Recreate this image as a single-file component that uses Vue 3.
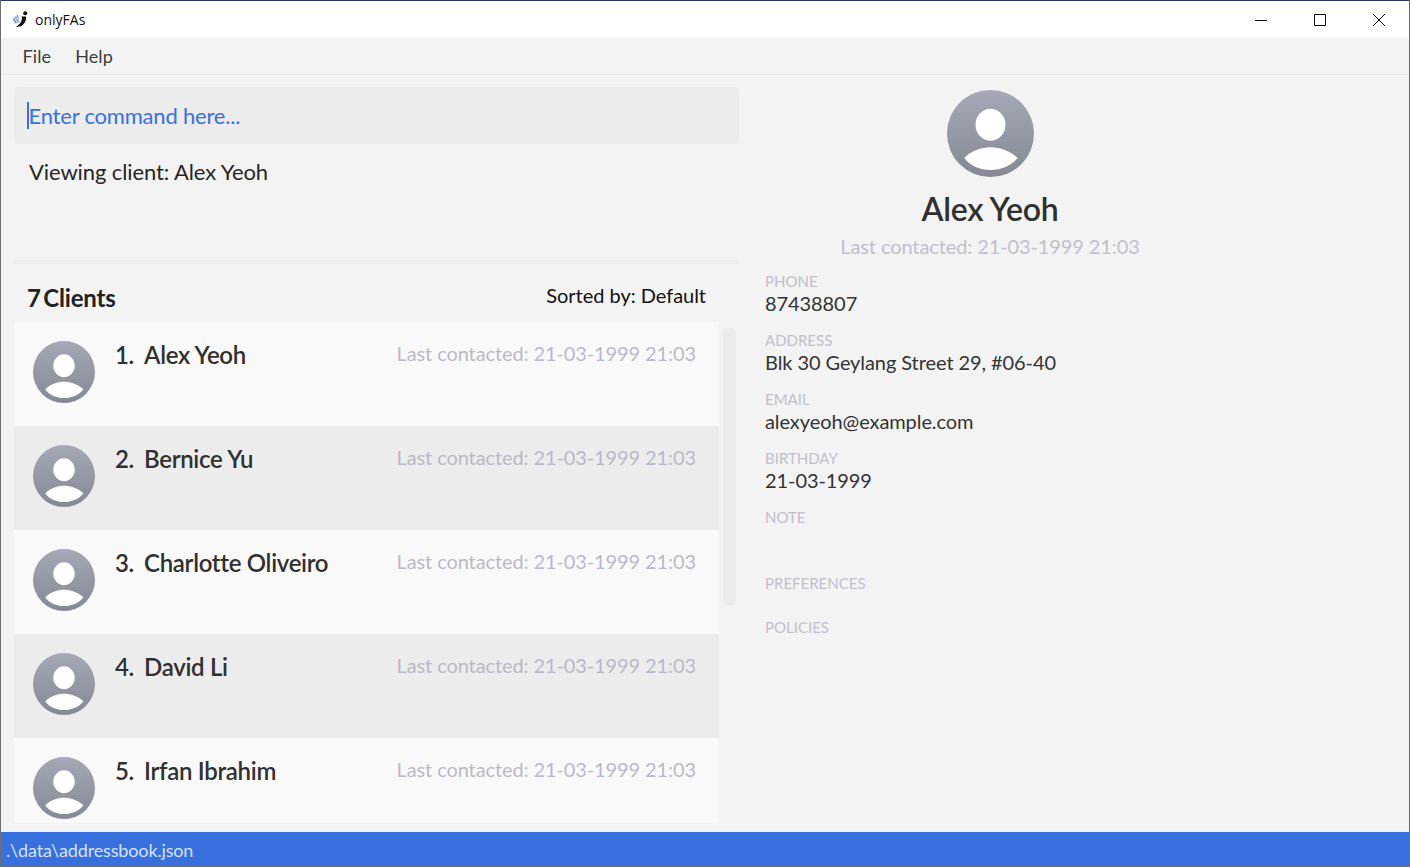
<script setup>
const clients = [
  { id: 1, name: 'Alex Yeoh' },
  { id: 2, name: 'Bernice Yu' },
  { id: 3, name: 'Charlotte Oliveiro' },
  { id: 4, name: 'David Li' },
  { id: 5, name: 'Irfan Ibrahim' },
]
const fields = [
  { label: 'PHONE', value: '87438807' },
  { label: 'ADDRESS', value: 'Blk 30 Geylang Street 29, #06-40' },
  { label: 'EMAIL', value: 'alexyeoh@example.com' },
  { label: 'BIRTHDAY', value: '21-03-1999' },
  { label: 'NOTE', value: '' },
  { label: 'PREFERENCES', value: '' },
  { label: 'POLICIES', value: '' },
]
</script>

<template>
  <div class="window">
    <header class="titlebar">
      <svg class="logo" viewBox="0 0 17 17" width="17" height="17">
        <path d="M0.5 8 L6 3.5 L7.5 11 L3 12.5 Z" fill="#7f9fd6" />
        <path d="M2.5 7 L5 11 M4.5 5.5 L6.5 10" stroke="#fff" stroke-width="0.8" fill="none" />
        <path d="M9.5 5.5 C11 9.5 8 13.5 4 15.5 C9.5 17 15 11.5 14 5.5 Z" fill="#111" />
        <circle cx="13.2" cy="2.2" r="2" fill="#111" />
      </svg>
      <span class="app-name">onlyFAs</span>
      <div class="controls">
        <svg viewBox="0 0 14 14" width="14" height="14"><path d="M1 7.5 H13" stroke="#111" fill="none" /></svg>
        <svg viewBox="0 0 14 14" width="14" height="14"><rect x="1.5" y="1.5" width="11" height="11" stroke="#111" fill="none" /></svg>
        <svg viewBox="0 0 14 14" width="14" height="14"><path d="M1 1 L13 13 M13 1 L1 13" stroke="#111" fill="none" /></svg>
      </div>
    </header>

    <nav class="menubar">
      <span>File</span>
      <span>Help</span>
    </nav>

    <main class="content">
      <section class="left">
        <div class="command"><i class="caret"></i><span>Enter command here...</span></div>
        <p class="result">Viewing client: Alex Yeoh</p>
        <div class="list-head">
          <strong>7 Clients</strong>
          <span class="sorted">Sorted by: Default</span>
        </div>
        <div class="list-wrap">
          <ul class="list">
            <li v-for="c in clients" :key="c.id" class="row">
              <svg class="avatar" viewBox="0 0 87 87">
                <defs>
                  <linearGradient :id="'g' + c.id" x1="0" y1="0" x2="0" y2="1">
                    <stop offset="0" stop-color="#a5a9b7" />
                    <stop offset="1" stop-color="#848994" />
                  </linearGradient>
                </defs>
                <circle cx="43.5" cy="43.5" r="43.5" :fill="'url(#g' + c.id + ')'" />
                <ellipse cx="43.5" cy="34.7" rx="15" ry="16" fill="#fff" />
                <path d="M17.3 68 C24 61 34 57.3 43.5 57.3 C53 57.3 63 61 70.7 68 C64 76 54 80 43.5 80 C33 80 23 76 17.3 68Z" fill="#fff" />
              </svg>
              <div class="name"><span class="num">{{ c.id }}.</span>{{ c.name }}</div>
              <div class="contacted">Last contacted: 21-03-1999 21:03</div>
            </li>
          </ul>
          <div class="track"><div class="thumb"></div></div>
        </div>
      </section>

      <aside class="detail">
        <div class="hero">
          <svg class="hero-avatar" viewBox="0 0 87 87">
            <defs>
              <linearGradient id="gh" x1="0" y1="0" x2="0" y2="1">
                <stop offset="0" stop-color="#a5a9b7" />
                <stop offset="1" stop-color="#848994" />
              </linearGradient>
            </defs>
            <circle cx="43.5" cy="43.5" r="43.5" fill="url(#gh)" />
            <ellipse cx="43.5" cy="34.7" rx="15" ry="16" fill="#fff" />
            <path d="M17.3 68 C24 61 34 57.3 43.5 57.3 C53 57.3 63 61 70.7 68 C64 76 54 80 43.5 80 C33 80 23 76 17.3 68Z" fill="#fff" />
          </svg>
          <h1>Alex Yeoh</h1>
          <div class="hero-contacted">Last contacted: 21-03-1999 21:03</div>
        </div>
        <dl class="fields">
          <div v-for="f in fields" :key="f.label" class="field" :class="'f-' + f.label.toLowerCase()">
            <dt>{{ f.label }}</dt>
            <dd v-if="f.value">{{ f.value }}</dd>
          </div>
        </dl>
      </aside>
    </main>

    <footer class="status">.\data\addressbook.json</footer>
  </div>
</template>

<style>
html, body { margin: 0; padding: 0; overflow: hidden; }
</style>

<style scoped>
.window {
  width: 1410px;
  height: 867px;
  box-sizing: border-box;
  display: flex;
  flex-direction: column;
  overflow: hidden;
  background: #f3f3f3;
  border: 1px solid #6e6e6e;
  border-top-color: #2b3460;
  font-family: Lato, sans-serif;
  color: #2f2f2f;
}
.titlebar {
  height: 37px;
  flex: none;
  background: #fff;
  display: flex;
  align-items: center;
  padding-left: 11px;
}
.logo { margin-right: 6px; }
.app-name { font: 14px "Open Sans", sans-serif; color: #111; }
.controls {
  margin-left: auto;
  display: flex;
  gap: 45px;
  padding-right: 23px;
}
.menubar {
  height: 37px;
  flex: none;
  box-sizing: border-box;
  border-bottom: 1px solid #ebebeb;
  display: flex;
  align-items: center;
  gap: 24px;
  padding-left: 21.5px;
  font-size: 18px;
  letter-spacing: 0.1px;
  color: #3c3c3c;
}
.content { flex: 1; min-height: 0; display: flex; }
.left {
  width: 725px;
  margin-left: 13px;
  padding-top: 12px;
  display: flex;
  flex-direction: column;
  min-height: 0;
}
.command {
  height: 57px;
  flex: none;
  background: #ececec;
  border-radius: 4px;
  display: flex;
  align-items: center;
  padding-left: 13px;
  font-size: 22px;
  letter-spacing: -0.2px;
  color: #3a70e0;
}
.caret { width: 1.5px; height: 27px; background: #3a70e0; }
.result {
  margin: 0;
  height: 120px;
  flex: none;
  box-sizing: border-box;
  padding: 14px 0 0 15px;
  font-size: 22px;
  letter-spacing: -0.1px;
  line-height: 28px;
  color: #262626;
  border-bottom: 4px solid #ededed;
}
.list-head {
  height: 58px;
  flex: none;
  box-sizing: border-box;
  display: flex;
  justify-content: space-between;
  align-items: center;
  padding: 5px 33px 0 13px;
  font-size: 20px;
  color: #111;
}
.sorted { margin-top: -2px; letter-spacing: -0.03px; }
.list-head strong {
  font-size: 24px;
  font-weight: 700;
  color: #222;
  letter-spacing: -0.2px;
  word-spacing: -3px;
  padding-top: 3px;
}
.list-wrap { height: 501px; flex: none; display: flex; overflow: hidden; }
.list { list-style: none; margin: 0; padding: 0; width: 705px; flex: none; }
.row {
  height: 104px;
  box-sizing: border-box;
  padding: 19px 23px 0 19px;
  display: flex;
  align-items: flex-start;
  background: #f9f9f9;
}
.row:nth-child(even) { background: #ececec; }
.avatar { width: 62px; height: 62px; flex: none; margin-right: 20px; }
.name { font-size: 24px; font-weight: 600; letter-spacing: -0.3px; color: #303030; margin-top: -1px; line-height: 30px; }
.num { margin-right: 10px; }
.contacted { margin-left: auto; margin-top: -1px; font-size: 20px; letter-spacing: -0.1px; color: #b9b9c9; line-height: 26px; }
.track { width: 13px; margin: 6px 0 0 4px; }
.thumb { height: 277px; background: #ebebeb; border-radius: 4px; }
.detail { margin-left: 26px; width: 450px; display: flex; flex-direction: column; }
.hero { display: flex; flex-direction: column; align-items: center; padding-top: 14.5px; }
.hero-avatar { width: 87px; height: 87px; }
h1 { margin: 12.5px 0 0; font-size: 32px; font-weight: 600; letter-spacing: -0.3px; line-height: 40px; color: #303030; }
.hero-contacted { font-size: 20px; letter-spacing: -0.1px; line-height: 26px; margin-top: 4px; color: #c0c0ce; }
.fields { margin: 13px 0 0; display: flex; flex-direction: column; }
.field { height: 59px; }
.f-note { height: 66px; }
.f-preferences { height: 44px; }
dt { font-size: 15px; line-height: 18px; color: #c0c0ce; }
dd { margin: 0; font-size: 20px; letter-spacing: -0.08px; line-height: 26px; color: #333; }
.status {
  height: 34px;
  flex: none;
  background: #3870dd;
  color: #d5e1f9;
  font-size: 18px;
  letter-spacing: -0.15px;
  line-height: 37px;
  padding-left: 5px;
}
</style>
